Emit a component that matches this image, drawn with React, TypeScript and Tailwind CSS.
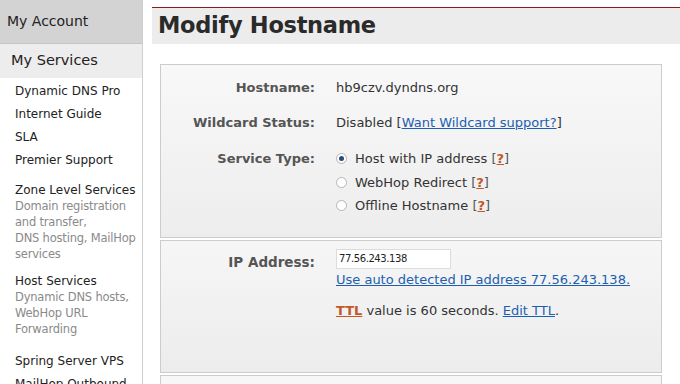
const FONT = { fontFamily: '"DejaVu Sans", Verdana, sans-serif' };

type NavItem = { title: string; sub?: string[]; gap?: string };

const NAV: NavItem[] = [
  { title: 'Dynamic DNS Pro' },
  { title: 'Internet Guide' },
  { title: 'SLA' },
  { title: 'Premier Support' },
  { title: 'Zone Level Services', sub: ['Domain registration', 'and transfer,', 'DNS hosting, MailHop', 'services'], gap: 'mt-[7px]' },
  { title: 'Host Services', sub: ['Dynamic DNS hosts,', 'WebHop URL', 'Forwarding'], gap: 'mt-[8px]' },
  { title: 'Spring Server VPS', gap: 'mt-[13px]' },
  { title: 'MailHop Outbound' },
];

function Help() {
  return (
    <span className="text-[#555]">
      [<span className="font-bold text-[#c0582a] underline">?</span>]
    </span>
  );
}

function Radio({ checked }: { checked?: boolean }) {
  return (
    <span className="inline-flex w-[11px] h-[11px] rounded-full border border-[#b5b5b5] bg-white items-center justify-center mr-[8px] shrink-0">
      {checked && <span className="w-[5px] h-[5px] rounded-full bg-[#2a4a7a]" />}
    </span>
  );
}

function Row({ label, children, className = '' }: { label: string; children: React.ReactNode; className?: string }) {
  return (
    <div className={`flex ${className}`}>
      <div className="w-[175px] text-right font-bold text-[13px] text-[#555] pr-[21px] shrink-0">{label}</div>
      <div className="text-[13px] text-[#333]">{children}</div>
    </div>
  );
}

export default function App() {
  return (
    <div className="w-[680px] h-[384px] overflow-hidden bg-white flex" style={FONT}>
      <aside className="w-[143px] shrink-0 border-r border-[#cfcfcf] flex flex-col overflow-hidden">
        <div className="h-[44px] shrink-0 bg-[#d3d3d3] border-b border-[#c4c4c4] flex items-center pl-[7px] text-[14px] text-[#222]">
          My Account
        </div>
        <div className="h-[34px] shrink-0 bg-[#ededed] flex items-center pl-[11px] text-[14.5px] text-[#222]">My Services</div>
        <ul className="pl-[15px] pt-[2px] text-[12px] text-[#222] shrink-0">
          {NAV.map(item => (
            <li key={item.title} className={item.gap ?? ''}>
              <div className="leading-[23px] h-[23px] whitespace-nowrap">{item.title}</div>
              {item.sub && (
                <div className="text-[#8a8a8a] text-[11.5px] leading-[16px] -mt-[4px] whitespace-nowrap tracking-[-0.2px]">
                  {item.sub.map(s => (
                    <div key={s}>{s}</div>
                  ))}
                </div>
              )}
            </li>
          ))}
        </ul>
      </aside>

      <main className="flex-1 pl-[9px] pt-[7px]">
        <div className="border-t border-[#8b1c1c] h-[37px] bg-[#ececec] flex items-center pl-[6px]">
          <h1 className="text-[22.5px] font-bold text-[#2a2a2a] tracking-[-0.3px]">Modify Hostname</h1>
        </div>

        <div className="ml-[8px] mr-[18px] mt-[20px] flex flex-col gap-[2px]">
          <section className="h-[174px] border border-[#cccccc] bg-gradient-to-b from-[#f8f8f8] to-[#ededed] pt-[13px]">
            <Row label="Hostname:">hb9czv.dyndns.org</Row>
            <Row label="Wildcard Status:" className="mt-[15px]">
              Disabled [<span className="text-[#1c5fb0] underline">Want Wildcard support?</span>]
            </Row>
            <Row label="Service Type:" className="mt-[17px]">
              <div className="flex flex-col gap-[4px]">
                <div className="flex items-center">
                  <Radio checked />
                  Host with IP address&nbsp;<Help />
                </div>
                <div className="flex items-center">
                  <Radio />
                  WebHop Redirect&nbsp;<Help />
                </div>
                <div className="flex items-center">
                  <Radio />
                  Offline Hostname&nbsp;<Help />
                </div>
              </div>
            </Row>
          </section>

          <section className="h-[133px] border border-[#cccccc] bg-gradient-to-b from-[#f6f6f6] to-[#ececec] pt-[8px]">
            <div className="flex">
              <div className="w-[175px] text-right font-bold text-[13.5px] text-[#555] pr-[21px] pt-[3px] shrink-0">IP Address:</div>
              <div className="text-[13px] text-[#333]">
                <div className="w-[115px] h-[20px] bg-white border border-[#dcdcdc] text-[10px] leading-[18px] pl-[2px] text-[#222] tracking-[-0.4px]">
                  77.56.243.138
                </div>
                <div className="text-[#1c5fb0] underline mt-[1px]">Use auto detected IP address 77.56.243.138.</div>
                <div className="mt-[11px]">
                  <span className="font-bold text-[#c0582a] underline">TTL</span> value is 60 seconds.{' '}
                  <span className="text-[#1c5fb0] underline">Edit TTL</span>.
                </div>
              </div>
            </div>
          </section>

          <section className="h-[40px] border border-[#cccccc] bg-[#f7f7f7]" />
        </div>
      </main>
    </div>
  );
}
